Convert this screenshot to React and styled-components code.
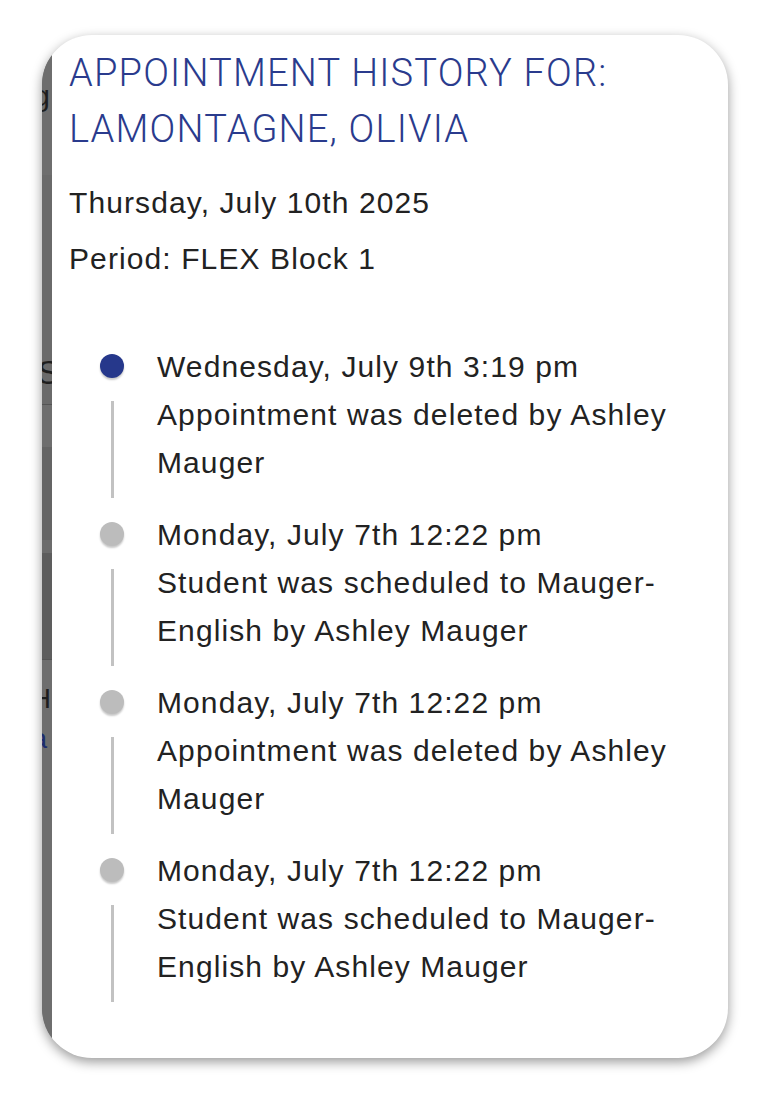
import React from "react";
import styled, { createGlobalStyle } from "styled-components";

const GlobalStyle = createGlobalStyle`
  body {
    margin: 0;
    background: #ffffff;
    font-family: "Liberation Sans", Arial, sans-serif;
  }
`;

const Page = styled.div`
  padding: 35px 40px 52px 42px;
`;

const Card = styled.div`
  display: flex;
  width: 686px;
  height: 1023px;
  border-radius: 50px;
  overflow: hidden;
  background: #ffffff;
  box-shadow: 0 4px 12px rgba(0, 0, 0, 0.4);
`;

// the dimmed page that peeks out behind the modal on the left
const Backdrop = styled.div`
  width: 10px;
  flex-shrink: 0;
  display: flex;
  flex-direction: column;
  background: #6e6e6e;
`;

const Band = styled.div`
  display: flex;
  flex-direction: column;
  align-items: flex-end;
  height: ${({ h }) => h}px;
  flex-shrink: 0;
  background: ${({ tone }) => tone || "#6e6e6e"};
  border-bottom: ${({ line }) => (line ? "1px solid #545454" : "none")};
  box-sizing: border-box;
  overflow: hidden;
`;

const Peek = styled.span`
  font-size: ${({ size }) => size || 30}px;
  line-height: 1;
  color: ${({ blue }) => (blue ? "#1d2c6e" : "#1e1e1e")};
  margin-top: ${({ top }) => top}px;
  margin-right: ${({ right }) => right || 0}px;
  white-space: nowrap;
`;

const Content = styled.div`
  flex: 1;
  padding: 10px 28px 0 17px;
  color: #222222;
`;

const Title = styled.h1`
  margin: 0;
  font-family: Roboto, "Liberation Sans", sans-serif;
  font-weight: 300;
  font-size: 38px;
  line-height: 56px;
  letter-spacing: 1.2px;
  color: #2a3b8d;
`;

const Meta = styled.div`
  margin-top: 18px;
`;

const MetaLine = styled.p`
  margin: 0;
  font-size: 30px;
  line-height: 56px;
  letter-spacing: 1.1px;
`;

const Timeline = styled.ul`
  list-style: none;
  margin: 56px 0 0;
  padding: 0 0 0 19px;
  display: flex;
  flex-direction: column;
  gap: 13px;
`;

const Item = styled.li`
  display: grid;
  grid-template-columns: 48px 1fr;
  column-gap: 21px;
  align-items: start;
`;

const Marker = styled.div`
  display: flex;
  flex-direction: column;
  align-items: center;
`;

const Dot = styled.span`
  width: 24px;
  height: 24px;
  margin-top: 11px;
  border-radius: 50%;
  background: ${({ active }) => (active ? "#26388b" : "#bcbcbc")};
  box-shadow: 0 2px 2px rgba(0, 0, 0, 0.22);
`;

const Rail = styled.span`
  width: 3px;
  height: 97px;
  margin-top: 23px;
  background: #c2c2c2;
`;

const Entry = styled.div`
  font-size: 30px;
  line-height: 48px;
  letter-spacing: 1.1px;
  color: #222222;
`;

const history = [
  {
    when: "Wednesday, July 9th 3:19 pm",
    what: "Appointment was deleted by Ashley Mauger",
    active: true,
  },
  {
    when: "Monday, July 7th 12:22 pm",
    what: "Student was scheduled to Mauger-English by Ashley Mauger",
  },
  {
    when: "Monday, July 7th 12:22 pm",
    what: "Appointment was deleted by Ashley Mauger",
  },
  {
    when: "Monday, July 7th 12:22 pm",
    what: "Student was scheduled to Mauger-English by Ashley Mauger",
  },
];

const App = () => {
  return (
    <>
      <GlobalStyle />
      <Page>
        <Card>
          <Backdrop>
            <Band h={140}>
              <Peek top={46} right={2}>
                ng
              </Peek>
            </Band>
            <Band h={230} tone="#6a6a6a" line>
              <Peek top={180} right={-8} size={34}>
                S
              </Peek>
            </Band>
            <Band h={42} />
            <Band h={93} tone="#646464" />
            <Band h={13} tone="#6c6c6c" />
            <Band h={107} tone="#5d5d5d" line />
            <Band h={398}>
              <Peek top={25} right={1} size={28}>
                H
              </Peek>
              <Peek top={12} right={5} size={28} blue>
                a
              </Peek>
            </Band>
          </Backdrop>
          <Content>
            <Title>
              APPOINTMENT HISTORY FOR:
              <br />
              LAMONTAGNE, OLIVIA
            </Title>
            <Meta>
              <MetaLine>Thursday, July 10th 2025</MetaLine>
              <MetaLine>Period: FLEX Block 1</MetaLine>
            </Meta>
            <Timeline>
              {history.map((entry, index) => (
                <Item key={index}>
                  <Marker>
                    <Dot active={entry.active} />
                    <Rail />
                  </Marker>
                  <Entry>
                    <div>{entry.when}</div>
                    <div>{entry.what}</div>
                  </Entry>
                </Item>
              ))}
            </Timeline>
          </Content>
        </Card>
      </Page>
    </>
  );
};

export default App;
